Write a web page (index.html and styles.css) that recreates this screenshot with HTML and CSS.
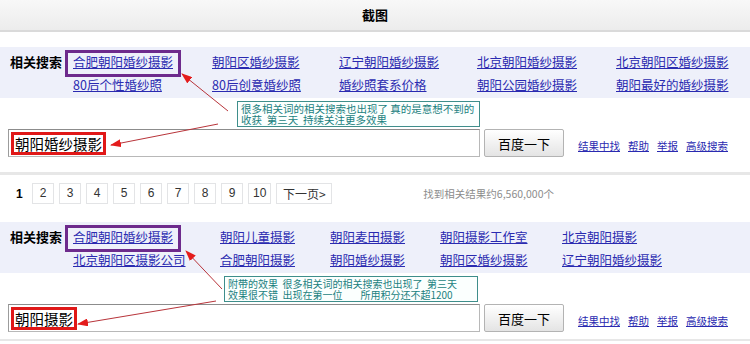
FILE: index.html
```html
<!DOCTYPE html>
<html lang="zh-CN">
<head>
    <meta charset="UTF-8">
    <title>截图</title>
    <link rel="stylesheet" href="styles.css">
</head>
<body>
    <header class="topbar">截图</header>

    <section class="shot">
        <div class="related">
            <b class="related-title">相关搜索</b>
            <div class="related-grid grid-one">
                <a href="#" class="hit-purple">合肥朝阳婚纱摄影</a>
                <a href="#">朝阳区婚纱摄影</a>
                <a href="#">辽宁朝阳婚纱摄影</a>
                <a href="#">北京朝阳婚纱摄影</a>
                <a href="#">北京朝阳区婚纱摄影</a>
                <a href="#">80后个性婚纱照</a>
                <a href="#">80后创意婚纱照</a>
                <a href="#">婚纱照套系价格</a>
                <a href="#">朝阳公园婚纱摄影</a>
                <a href="#">朝阳最好的婚纱摄影</a>
            </div>
        </div>
        <div class="note note-one">很多相关词的相关搜索也出现了 真的是意想不到的
收获  第三天  持续关注更多效果</div>
        <div class="search">
            <div class="field"><span class="hit-red">朝阳婚纱摄影</span></div>
            <button class="btn" type="button">百度一下</button>
            <div class="tools">
                <a href="#">结果中找</a>
                <a href="#">帮助</a>
                <a href="#">举报</a>
                <a href="#">高级搜索</a>
            </div>
        </div>
    </section>

    <div class="rule"></div>

    <div class="pager">
        <strong class="cur">1</strong>
        <a href="#" class="pg">2</a>
        <a href="#" class="pg">3</a>
        <a href="#" class="pg">4</a>
        <a href="#" class="pg">5</a>
        <a href="#" class="pg">6</a>
        <a href="#" class="pg">7</a>
        <a href="#" class="pg">8</a>
        <a href="#" class="pg">9</a>
        <a href="#" class="pg">10</a>
        <a href="#" class="pg pg-next">下一页&gt;</a>
        <span class="count">找到相关结果约6,560,000个</span>
    </div>

    <section class="shot shot-two">
        <div class="related">
            <b class="related-title">相关搜索</b>
            <div class="related-grid grid-two">
                <a href="#" class="hit-purple">合肥朝阳婚纱摄影</a>
                <a href="#">朝阳儿童摄影</a>
                <a href="#">朝阳麦田摄影</a>
                <a href="#">朝阳摄影工作室</a>
                <a href="#">北京朝阳摄影</a>
                <a href="#">北京朝阳区摄影公司</a>
                <a href="#">合肥朝阳摄影</a>
                <a href="#">朝阳婚纱摄影</a>
                <a href="#">朝阳区婚纱摄影</a>
                <a href="#">辽宁朝阳婚纱摄影</a>
            </div>
        </div>
        <div class="note note-two">附带的效果  很多相关词的相关搜索也出现了  第三天
效果很不错  出现在第一位        所用积分还不超1200</div>
        <div class="search">
            <div class="field"><span class="hit-red">朝阳摄影</span></div>
            <button class="btn" type="button">百度一下</button>
            <div class="tools">
                <a href="#">结果中找</a>
                <a href="#">帮助</a>
                <a href="#">举报</a>
                <a href="#">高级搜索</a>
            </div>
        </div>
    </section>

    <div class="rule rule-end"></div>

    <!-- annotation arrows drawn over the screenshot -->
    <svg class="arrows" width="750" height="344" viewBox="0 0 750 344">
        <defs>
            <marker id="head" markerWidth="11" markerHeight="8" refX="10" refY="4" orient="auto" markerUnits="userSpaceOnUse">
                <path d="M0,0 L11,4 L0,8 Z" fill="#e41c1c"/>
            </marker>
        </defs>
        <line x1="228" y1="111" x2="182" y2="74" marker-end="url(#head)"/>
        <line x1="218" y1="124" x2="111" y2="145" marker-end="url(#head)"/>
        <line x1="222" y1="289" x2="186" y2="251" marker-end="url(#head)"/>
        <line x1="216" y1="301" x2="78" y2="324" marker-end="url(#head)"/>
    </svg>
</body>
</html>
```

FILE: styles.css
```css
*,::before,::after {
    box-sizing: border-box;
}
body {
    margin: 0;
    width: 750px;
    height: 344px;
    position: relative;
    overflow: hidden;
    background: #fff;
    font-family: "Noto Sans CJK SC", "Liberation Sans", sans-serif;
    color: #000;
}
a {
    color: #2a2ab0;
    text-decoration: underline;
}
.topbar {
    height: 32px;
    line-height: 30px;
    text-align: center;
    font-size: 13px;
    font-weight: bold;
    background: linear-gradient(#f8f8f8, #ececec);
    border-bottom: 2px solid #dadada;
}
.related {
    display: flex;
    height: 51px;
    margin-top: 15px;
    padding: 5px 0 0 10px;
    background-color: #eef0fa;
    line-height: 19px;
}
.related-title {
    width: 63px;
    font-size: 13px;
}
.related-grid {
    display: grid;
    font-size: 12.5px;
}
.grid-one {
    grid-template-columns: 139px 127px 138px 139px auto;
}
.grid-two {
    grid-template-columns: 147px 110px 110px 122px auto;
}
.related-grid a {
    white-space: nowrap;
    justify-self: start;
}
.hit-purple {
    padding: 0 6px;
    margin: 0 -6px;
    outline: 3px solid #6d2a8c;
    outline-offset: -1px;
}
.note {
    width: 243px;
    margin: 3px 0 2px 237px;
    padding: 1px 3px;
    border: 1px solid #3e8e8b;
    background: #fbfffe;
    color: #1a7f80;
    font-size: 10.5px;
    line-height: 11px;
    white-space: pre;
}
.note-two {
    width: 254px;
    margin-left: 224px;
    font-size: 10px;
}
.search {
    display: flex;
    align-items: center;
    padding-left: 8px;
}
.field {
    display: flex;
    align-items: center;
    width: 472px;
    height: 28px;
    padding: 0 2px;
    border: 1px solid #b8b8b8;
    border-top-color: #8c8c8c;
    border-left-color: #9c9c9c;
}
.hit-red {
    padding: 0 1px;
    border: 3px solid #e01818;
    font-size: 14.5px;
    line-height: 17px;
}
.btn {
    width: 80px;
    height: 28px;
    margin-left: 4px;
    border: 1px solid #b3b3b3;
    border-radius: 2px;
    background: linear-gradient(#ffffff, #e4e4e4);
    font-family: inherit;
    font-size: 13px;
    color: #000;
    padding: 0;
}
.tools {
    display: flex;
    gap: 8px;
    margin-left: 14px;
    padding-top: 4px;
    font-size: 10.5px;
}
.rule {
    height: 3px;
    margin-top: 15px;
    background-color: #e7e7e7;
}
.rule-end {
    height: 2px;
    margin-top: 7px;
}
.pager {
    display: flex;
    align-items: center;
    gap: 5px;
    height: 21px;
    margin-top: 8px;
    padding-left: 16px;
    font-family: "Liberation Sans", sans-serif;
    font-size: 12px;
}
.cur {
    width: 11px;
    color: #000;
}
.pg {
    min-width: 22px;
    height: 21px;
    line-height: 19px;
    padding: 0 4px;
    text-align: center;
    border: 1px solid #e3e4e6;
    color: #333;
    text-decoration: none;
}
.pg-next {
    width: 56px;
    font-family: "Noto Sans CJK SC", sans-serif;
}
.count {
    margin-left: 86px;
    color: #8c8c8c;
    font-size: 10.5px;
    font-family: "Noto Sans CJK SC", sans-serif;
}
.shot-two .related {
    margin-top: 18px;
}
.arrows {
    position: absolute;
    top: 0;
    left: 0;
    pointer-events: none;
}
.arrows line {
    stroke: #b8343a;
    stroke-width: 1;
}
```
